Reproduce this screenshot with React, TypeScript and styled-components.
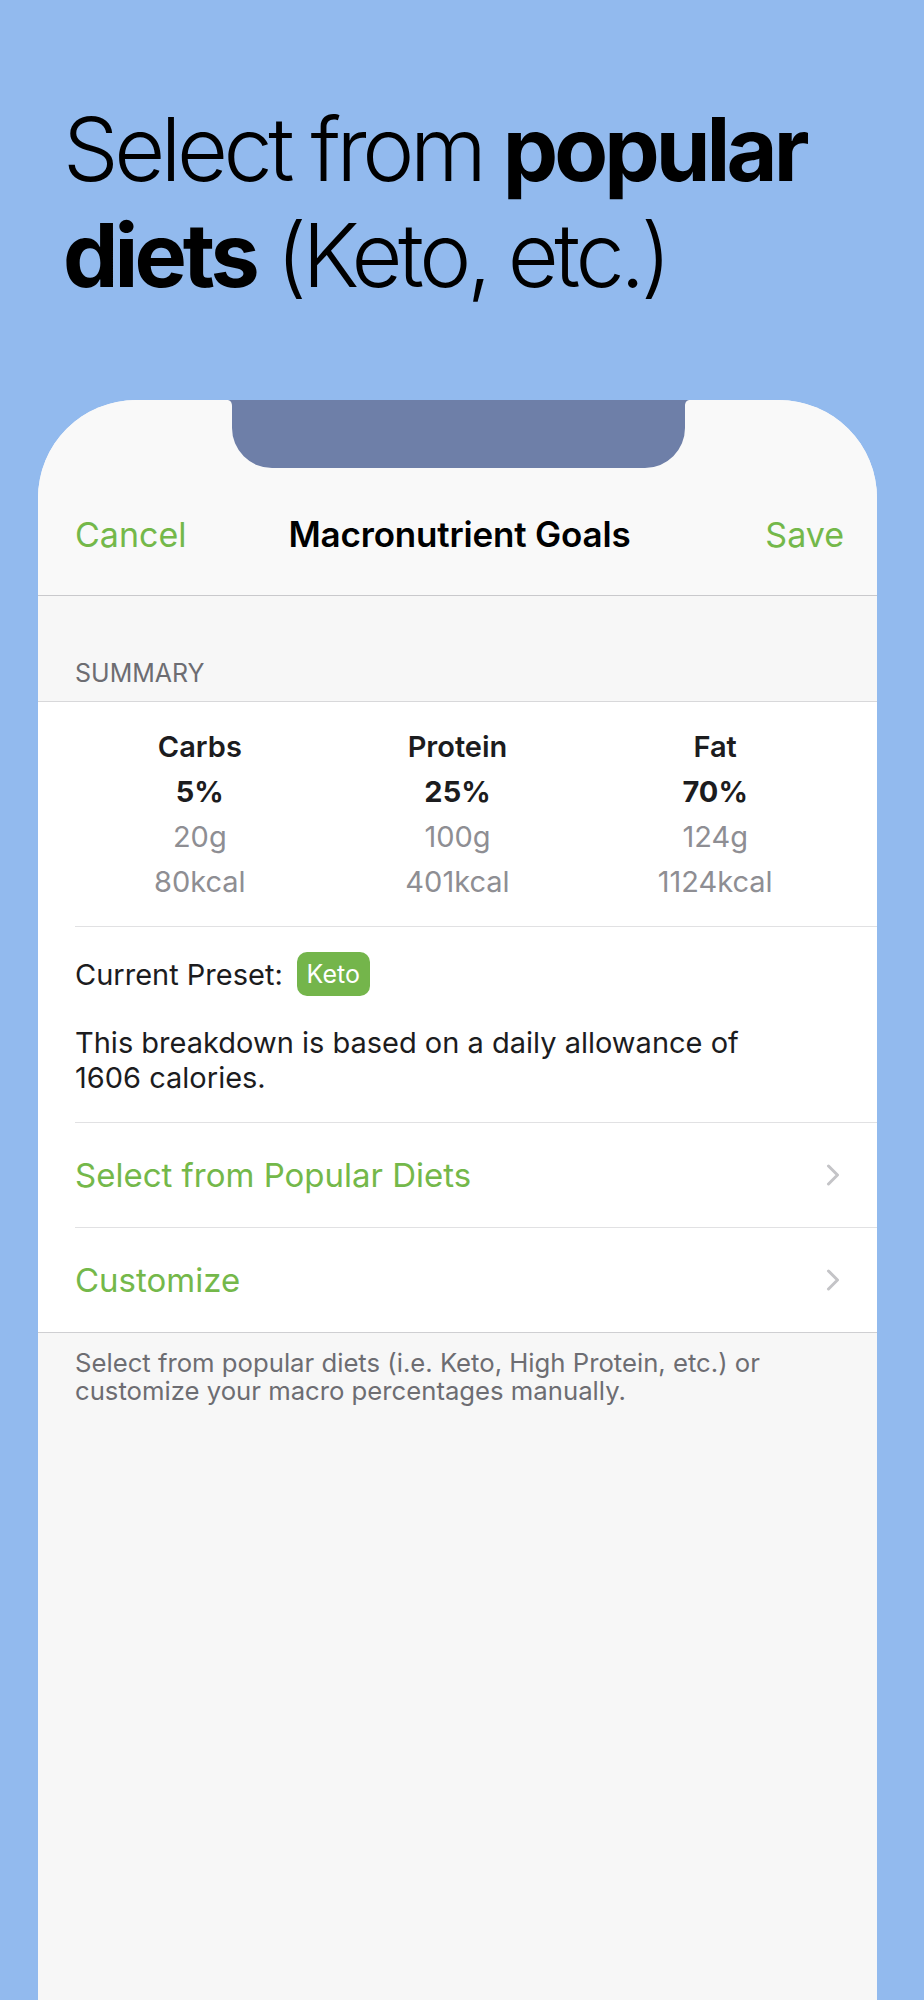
import styled, { createGlobalStyle } from "styled-components";

const GlobalStyle = createGlobalStyle`
  *, *::before, *::after {
    box-sizing: border-box;
  }
  body {
    margin: 0;
    background: #92baee;
    font-family: Inter, "Noto Sans", sans-serif;
    -webkit-font-smoothing: antialiased;
  }
`;

const green = "#74b84a";

const Page = styled.div`
  width: 924px;
  height: 2000px;
  overflow: hidden;
  background: #92baee;
`;

const Heading = styled.h1`
  margin: 0;
  padding: 96px 0 0 63px;
  font-size: 88px;
  line-height: 106px;
  font-weight: 300;
  letter-spacing: -0.05em;
  color: #000;

  b {
    font-weight: 700;
    letter-spacing: -0.045em;
  }
`;

const Phone = styled.div`
  position: relative;
  margin: 92px 0 0 38px;
  width: 839px;
  height: 1600px;
  background: #f7f7f7;
  border-radius: 98px 98px 0 0;
  overflow: hidden;
`;

const Notch = styled.svg`
  position: absolute;
  top: 0;
  left: 189px;
`;

const NavBar = styled.div`
  height: 196px;
  display: flex;
  align-items: flex-end;
  padding: 0 33px 22px 37px;
  background: #f9f9f9;
  border-bottom: 1px solid #c9c9cc;
`;

const NavInner = styled.div`
  flex: 1;
  height: 78px;
  display: grid;
  grid-template-columns: 1fr auto 1fr;
  align-items: center;
`;

const NavButton = styled.span<{ $right?: boolean }>`
  font-size: 34px;
  color: ${green};
  justify-self: ${(p) => (p.$right ? "end" : "start")};
`;

const NavTitle = styled.span`
  font-size: 35px;
  font-weight: 600;
  letter-spacing: -0.005em;
  color: #000;
`;

const SectionHeader = styled.div`
  padding: 62px 0 13px 37px;
  font-size: 25px;
  line-height: 30px;
  color: #6d6d72;
  text-transform: uppercase;
`;

const Group = styled.div`
  background: #fff;
  border-top: 1px solid #d8d8da;
  border-bottom: 1px solid #cfcfd2;
`;

const Macros = styled.div`
  display: grid;
  grid-template-columns: repeat(3, 1fr);
  padding: 22px 33px 22px 33px;
  text-align: center;
`;

const MacroCell = styled.div`
  display: flex;
  flex-direction: column;
`;

const MacroLine = styled.div<{ $weight?: number; $muted?: boolean }>`
  font-size: 29px;
  line-height: 45px;
  font-weight: ${(p) => p.$weight || 400};
  color: ${(p) => (p.$muted ? "#8e8e93" : "#1c1c1e")};
`;

const Separator = styled.div`
  height: 1px;
  margin-left: 37px;
  background: #e1e1e3;
`;

const Preset = styled.div`
  padding: 25px 33px 27px 37px;
`;

const PresetRow = styled.div`
  display: flex;
  align-items: center;
  gap: 14px;
  height: 44px;
  font-size: 29px;
  color: #1c1c1e;
`;

const Badge = styled.span`
  display: inline-flex;
  align-items: center;
  justify-content: center;
  width: 73px;
  height: 44px;
  border-radius: 10px;
  background: #74b54b;
  color: #fff;
  font-size: 25px;
`;

const Paragraph = styled.p`
  margin: 29px 0 0;
  font-size: 29px;
  line-height: 35px;
  color: #1c1c1e;
  max-width: 700px;
`;

const Row = styled.div`
  height: 104px;
  display: flex;
  align-items: center;
  justify-content: space-between;
  padding: 0 37px 0 37px;
  font-size: 33px;
  color: ${green};
`;

const Footer = styled.p`
  margin: 0;
  padding: 16px 40px 0 37px;
  font-size: 25.7px;
  line-height: 28px;
  color: #6d6d72;
`;

const Chevron = () => (
  <svg width="14" height="22" viewBox="0 0 14 22">
    <path
      d="M2.5 2 L11.5 11 L2.5 20"
      fill="none"
      stroke="#c4c4c7"
      strokeWidth="3"
      strokeLinecap="round"
      strokeLinejoin="round"
    />
  </svg>
);

const macros = [
  { name: "Carbs", pct: "5%", grams: "20g", kcal: "80kcal" },
  { name: "Protein", pct: "25%", grams: "100g", kcal: "401kcal" },
  { name: "Fat", pct: "70%", grams: "124g", kcal: "1124kcal" },
];

const App = () => {
  return (
    <Page>
      <GlobalStyle />
      <Heading>
        Select from <b>popular</b>
        <br />
        <b>diets</b> (Keto, etc.)
      </Heading>
      <Phone>
        <Notch width="463" height="68" viewBox="0 0 463 68">
          <path
            d="M0 0 H463 C460 0 458 2 458 6 V28 A40 40 0 0 1 418 68 H45 A40 40 0 0 1 5 28 V6 C5 2 3 0 0 0 Z"
            fill="#6e7fa8"
          />
        </Notch>
        <NavBar>
          <NavInner>
            <NavButton>Cancel</NavButton>
            <NavTitle>Macronutrient Goals</NavTitle>
            <NavButton $right>Save</NavButton>
          </NavInner>
        </NavBar>
        <SectionHeader>Summary</SectionHeader>
        <Group>
          <Macros>
            {macros.map((m) => (
              <MacroCell key={m.name}>
                <MacroLine $weight={600}>{m.name}</MacroLine>
                <MacroLine $weight={700}>{m.pct}</MacroLine>
                <MacroLine $muted>{m.grams}</MacroLine>
                <MacroLine $muted>{m.kcal}</MacroLine>
              </MacroCell>
            ))}
          </Macros>
          <Separator />
          <Preset>
            <PresetRow>
              Current Preset: <Badge>Keto</Badge>
            </PresetRow>
            <Paragraph>
              This breakdown is based on a daily allowance of 1606 calories.
            </Paragraph>
          </Preset>
          <Separator />
          <Row>
            Select from Popular Diets
            <Chevron />
          </Row>
          <Separator />
          <Row>
            Customize
            <Chevron />
          </Row>
        </Group>
        <Footer>
          Select from popular diets (i.e. Keto, High Protein, etc.) or
          customize your macro percentages manually.
        </Footer>
      </Phone>
    </Page>
  );
};

export default App;
